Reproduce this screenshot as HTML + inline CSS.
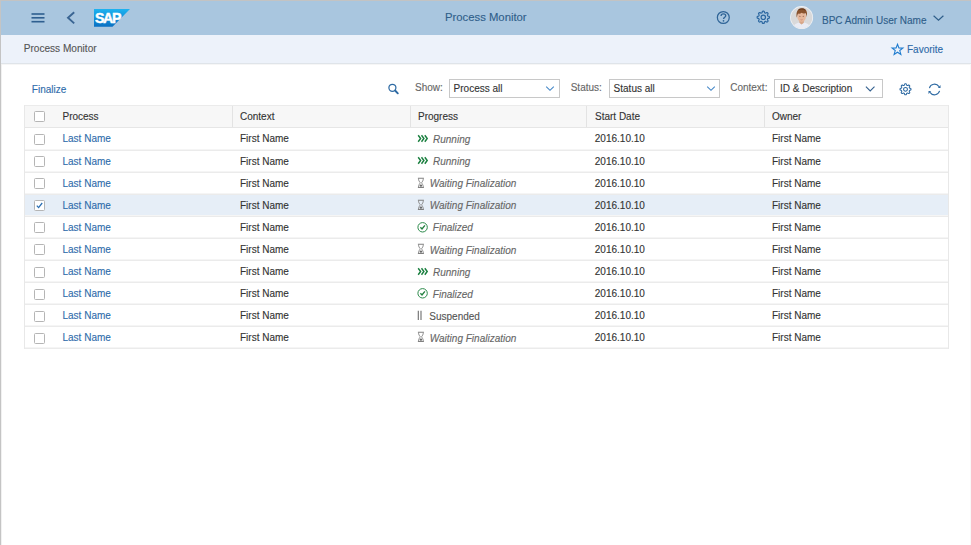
<!DOCTYPE html>
<html><head><meta charset="utf-8">
<style>
*{margin:0;padding:0;box-sizing:border-box}
html,body{width:971px;height:545px;overflow:hidden;background:#fff}
body{position:relative;font-family:"Liberation Sans",sans-serif;font-size:10px;color:#333}
.a{position:absolute;white-space:nowrap;line-height:1;-webkit-text-stroke:0.12px currentColor}
#edgeT{position:absolute;left:0;top:0;width:971px;height:1px;background:#c3c3c3}
#edgeL{position:absolute;left:0;top:0;width:1px;height:545px;background:#c4c4c4}
#edgeL2{position:absolute;left:1px;top:64px;width:1px;height:481px;background:#f1f1f1}
#edgeR{position:absolute;left:970px;top:64px;width:1px;height:481px;background:#f9f9f9}
#shell{position:absolute;left:1px;top:1px;width:970px;height:34px;background:#a9c6df}
#sub{position:absolute;left:1px;top:35px;width:970px;height:29px;background:#edf2fa;border-bottom:1px solid #dfe4e9}
#subsh{position:absolute;left:1px;top:64px;width:970px;height:1px;background:#f6f6f6}
.hdr{position:absolute;left:24px;top:105px;width:925px;height:23px;background:#f7f7f7;border-top:1px solid #ebebeb;border-bottom:1px solid #e6e6e6}
.selbg{position:absolute;left:25px;width:923px;background:#e6eef7}
.hl{position:absolute;left:24px;width:925px;height:2px;background:linear-gradient(#f5f5f5 0,#f5f5f5 50%,#ebebeb 50%,#ebebeb 100%)}
.vl{position:absolute;width:1px;background:#e8e8e8}
.vd{position:absolute;top:106px;width:1px;height:21px;background:#e3e3e3}
.cb{position:absolute;left:34px;width:11px;height:11px;border:1.5px solid #b5b5b5;border-radius:1.5px;background:#fff}
.lnk{color:#2f6cab}
.it{font-style:italic;color:#666}
.dd{position:absolute;top:79px;height:19px;border:1px solid #c8c8c8;background:#fff}
.lbl{color:#666}
</style></head><body>
<div id="shell"></div>
<div id="sub"></div>
<div id="subsh"></div>
<div id="edgeT"></div>
<div id="edgeL"></div>
<div id="edgeL2"></div>
<div id="edgeR"></div>

<svg class="a" style="left:31px;top:12px" width="14" height="11" viewBox="0 0 14 11">
  <rect x="0.5" y="1.2" width="13" height="1.6" fill="#2f5f90"/>
  <rect x="0.5" y="5" width="13" height="1.6" fill="#2f5f90"/>
  <rect x="0.5" y="8.9" width="13" height="1.6" fill="#2f5f90"/>
</svg>
<svg class="a" style="left:64px;top:10px" width="14" height="16" viewBox="0 0 14 16">
  <path d="M10.2 2.2 L4 7.8 L10.2 13.4" fill="none" stroke="#3a6593" stroke-width="1.9"/>
</svg>
<svg class="a" style="left:94px;top:9px" width="37" height="18" viewBox="0 0 37 18">
  <defs><linearGradient id="sg" x1="0" y1="0" x2="0" y2="1"><stop offset="0" stop-color="#1eb3f0"/><stop offset="1" stop-color="#0a6fc2"/></linearGradient></defs>
  <path d="M0 0 H36 L18.5 17.8 H0 Z" fill="url(#sg)"/>
  <text x="0.9" y="14.2" font-family="Liberation Sans" font-weight="bold" font-size="14.2" fill="#fff" stroke="#fff" stroke-width="0.45" letter-spacing="-1.3">SAP</text>
</svg>
<div class="a" style="left:445px;top:11.8px;font-size:11.3px;color:#2f5e8a">Process Monitor</div>

<svg class="a" style="left:715px;top:9px" width="17" height="17" viewBox="0 0 17 17">
  <circle cx="8.3" cy="8.5" r="5.95" fill="none" stroke="#2f6497" stroke-width="1.25"/>
  <path d="M6.05 6.95 C6.05 5.6 7.05 4.9 8.4 4.9 C9.8 4.9 10.75 5.7 10.75 6.85 C10.75 8.3 8.55 8.45 8.55 10.1" fill="none" stroke="#2f6497" stroke-width="1.3"/>
  <circle cx="8.5" cy="11.85" r="0.85" fill="#2f6497"/>
</svg>
<svg class="a" style="left:755px;top:9px" width="17" height="17" viewBox="0 0 17 17">
  <g transform="translate(8.3,8.3)">
  <path d="M0.00 -6.15 L0.24 -6.14 L0.48 -6.11 L0.71 -6.02 L0.92 -5.78 L1.05 -5.30 L1.15 -4.81 L1.29 -4.56 L1.44 -4.45 L1.61 -4.37 L1.78 -4.30 L1.95 -4.23 L2.12 -4.16 L2.32 -4.13 L2.58 -4.22 L3.00 -4.49 L3.44 -4.74 L3.75 -4.76 L3.98 -4.66 L4.17 -4.51 L4.35 -4.35 L4.51 -4.17 L4.66 -3.98 L4.76 -3.75 L4.74 -3.44 L4.49 -3.00 L4.22 -2.58 L4.13 -2.32 L4.16 -2.12 L4.23 -1.95 L4.30 -1.78 L4.37 -1.61 L4.45 -1.44 L4.56 -1.29 L4.81 -1.15 L5.30 -1.05 L5.78 -0.92 L6.02 -0.71 L6.11 -0.48 L6.14 -0.24 L6.15 0.00 L6.14 0.24 L6.11 0.48 L6.02 0.71 L5.78 0.92 L5.30 1.05 L4.81 1.15 L4.56 1.29 L4.45 1.44 L4.37 1.61 L4.30 1.78 L4.23 1.95 L4.16 2.12 L4.13 2.32 L4.22 2.58 L4.49 3.00 L4.74 3.44 L4.76 3.75 L4.66 3.98 L4.51 4.17 L4.35 4.35 L4.17 4.51 L3.98 4.66 L3.75 4.76 L3.44 4.74 L3.00 4.49 L2.58 4.22 L2.32 4.13 L2.12 4.16 L1.95 4.23 L1.78 4.30 L1.61 4.37 L1.44 4.45 L1.29 4.56 L1.15 4.81 L1.05 5.30 L0.92 5.78 L0.71 6.02 L0.48 6.11 L0.24 6.14 L0.00 6.15 L-0.24 6.14 L-0.48 6.11 L-0.71 6.02 L-0.92 5.78 L-1.05 5.30 L-1.15 4.81 L-1.29 4.56 L-1.44 4.45 L-1.61 4.37 L-1.78 4.30 L-1.95 4.23 L-2.12 4.16 L-2.32 4.13 L-2.58 4.22 L-3.00 4.49 L-3.44 4.74 L-3.75 4.76 L-3.98 4.66 L-4.17 4.51 L-4.35 4.35 L-4.51 4.17 L-4.66 3.98 L-4.76 3.75 L-4.74 3.44 L-4.49 3.00 L-4.22 2.58 L-4.13 2.32 L-4.16 2.12 L-4.23 1.95 L-4.30 1.78 L-4.37 1.61 L-4.45 1.44 L-4.56 1.29 L-4.81 1.15 L-5.30 1.05 L-5.78 0.92 L-6.02 0.71 L-6.11 0.48 L-6.14 0.24 L-6.15 0.00 L-6.14 -0.24 L-6.11 -0.48 L-6.02 -0.71 L-5.78 -0.92 L-5.30 -1.05 L-4.81 -1.15 L-4.56 -1.29 L-4.45 -1.44 L-4.37 -1.61 L-4.30 -1.78 L-4.23 -1.95 L-4.16 -2.12 L-4.13 -2.32 L-4.22 -2.58 L-4.49 -3.00 L-4.74 -3.44 L-4.76 -3.75 L-4.66 -3.98 L-4.51 -4.17 L-4.35 -4.35 L-4.17 -4.51 L-3.98 -4.66 L-3.75 -4.76 L-3.44 -4.74 L-3.00 -4.49 L-2.58 -4.22 L-2.32 -4.13 L-2.12 -4.16 L-1.95 -4.23 L-1.78 -4.30 L-1.61 -4.37 L-1.44 -4.45 L-1.29 -4.56 L-1.15 -4.81 L-1.05 -5.30 L-0.92 -5.78 L-0.71 -6.02 L-0.48 -6.11 L-0.24 -6.14Z" fill="none" stroke="#2c67a0" stroke-width="1.2" stroke-linejoin="round"/>
  <circle r="2.2" fill="none" stroke="#2c67a0" stroke-width="1.2"/>
  </g>
</svg>
<svg class="a" style="left:790px;top:6px" width="24" height="24" viewBox="0 0 24 24">
  <defs><clipPath id="avc"><circle cx="11.6" cy="11.6" r="10.7"/></clipPath></defs>
  <circle cx="11.6" cy="11.6" r="11.5" fill="#f0f2f5"/>
  <g clip-path="url(#avc)">
    <rect x="0" y="0" width="24" height="24" fill="#d9d9da"/>
    <path d="M2.5 24 C3 18.8 6 17 9.2 16.4 L11.6 18.6 L14.1 16.4 C17.3 17 20.2 18.8 20.7 24 Z" fill="#e9ebf4"/>
    <path d="M9.4 12.5 L9.4 16.8 L11.6 18.6 L13.8 16.8 L13.8 12.5 Z" fill="#d8a688"/>
    <ellipse cx="11.6" cy="10.4" rx="4.3" ry="5.4" fill="#e6b79b"/>
    <ellipse cx="9.9" cy="10.2" rx="0.8" ry="0.45" fill="#7d5546"/>
    <ellipse cx="13.3" cy="10.2" rx="0.8" ry="0.45" fill="#7d5546"/>
    <path d="M10.6 13.6 Q11.6 14.1 12.6 13.6" stroke="#c77f6f" stroke-width="0.7" fill="none"/>
    <path d="M6.7 11.8 C5.6 5 8.4 2.3 11.9 2.3 C15.6 2.3 17.8 4.6 16.9 11.2 C16.5 9.2 16.2 7.8 15.3 7 C14.2 8 12.6 7.6 11.6 6.8 C10.6 7.8 9.2 8 8.1 7.6 C7.5 8.6 7.1 10 6.7 11.8 Z" fill="#8a532e"/>
    <path d="M8.5 3.8 C10 2.6 13.6 2.6 15.2 4.2" stroke="#5e3419" stroke-width="0.9" fill="none"/>
  </g>
</svg>
<div class="a" style="left:822px;top:16px;font-size:10px;color:#2f5e8a">BPC Admin User Name</div>
<svg class="a" style="left:932px;top:14.3px" width="13" height="9" viewBox="0 0 13 9">
  <path d="M1.6 1.7 L6.5 6.1 L11.4 1.7" fill="none" stroke="#2f5e8a" stroke-width="1.2"/>
</svg>

<div class="a" style="left:23.7px;top:43.5px;font-size:10.1px;color:#555">Process Monitor</div>
<svg class="a" style="left:890px;top:41.5px" width="15" height="15" viewBox="0 0 15 15">
  <g transform="translate(7.5,7.7) scale(0.87) translate(-7.5,-7.5)">
  <path d="M7.5 1.3 L9.1 5.6 L13.7 5.7 L10.1 8.5 L11.4 12.9 L7.5 10.4 L3.6 12.9 L4.9 8.5 L1.3 5.7 L5.9 5.6 Z" fill="none" stroke="#1f7ccf" stroke-width="1.25" stroke-linejoin="miter"/>
  </g>
</svg>
<div class="a" style="left:907px;top:44.6px;font-size:10px;color:#2d6aa8">Favorite</div>

<div class="a lnk" style="left:31.8px;top:85.4px">Finalize</div>
<svg class="a" style="left:386px;top:82px" width="14" height="14" viewBox="0 0 14 14">
  <circle cx="6.4" cy="5.75" r="3.5" fill="none" stroke="#2d6aa3" stroke-width="1.25"/>
  <path d="M9.1 8.5 L11.8 11.3" stroke="#2d6aa3" stroke-width="1.9" stroke-linecap="round"/>
</svg>
<div class="a lbl" style="left:415px;top:83px">Show:</div>
<div class="dd" style="left:449px;width:111px"></div>
<div class="a" style="left:453.6px;top:84.2px">Process all</div>
<svg class="a" style="left:545px;top:85px" width="10" height="7" viewBox="0 0 10 7">
  <path d="M1.2 1.6 L5 5.3 L8.8 1.6" fill="none" stroke="#4185c6" stroke-width="1.05"/>
</svg>
<div class="a lbl" style="left:570.7px;top:83px">Status:</div>
<div class="dd" style="left:609px;width:111px"></div>
<div class="a" style="left:613.6px;top:84.2px">Status all</div>
<svg class="a" style="left:706px;top:85px" width="10" height="7" viewBox="0 0 10 7">
  <path d="M1.2 1.6 L5 5.3 L8.8 1.6" fill="none" stroke="#4185c6" stroke-width="1.05"/>
</svg>
<div class="a lbl" style="left:730.2px;top:83px">Context:</div>
<div class="dd" style="left:774px;width:109px"></div>
<div class="a" style="left:780px;top:84.2px">ID &amp; Description</div>
<svg class="a" style="left:864px;top:85px" width="12" height="8" viewBox="0 0 12 8">
  <path d="M1.9 1.7 L6.2 5.9 L10.5 1.7" fill="none" stroke="#34618f" stroke-width="1.1"/>
</svg>
<svg class="a" style="left:898px;top:81.5px" width="15" height="15" viewBox="0 0 15 15">
  <g transform="translate(7.5,7.3)">
  <path d="M0.00 -5.50 L0.22 -5.49 L0.43 -5.46 L0.64 -5.39 L0.82 -5.18 L0.95 -4.76 L1.04 -4.33 L1.16 -4.12 L1.30 -4.01 L1.46 -3.94 L1.61 -3.88 L1.76 -3.82 L1.92 -3.76 L2.09 -3.73 L2.33 -3.80 L2.69 -4.03 L3.08 -4.24 L3.36 -4.26 L3.56 -4.17 L3.73 -4.04 L3.89 -3.89 L4.04 -3.73 L4.17 -3.56 L4.26 -3.36 L4.24 -3.08 L4.03 -2.69 L3.80 -2.33 L3.73 -2.09 L3.76 -1.92 L3.82 -1.76 L3.88 -1.61 L3.94 -1.46 L4.01 -1.30 L4.12 -1.16 L4.33 -1.04 L4.76 -0.95 L5.18 -0.82 L5.39 -0.64 L5.46 -0.43 L5.49 -0.22 L5.50 0.00 L5.49 0.22 L5.46 0.43 L5.39 0.64 L5.18 0.82 L4.76 0.95 L4.33 1.04 L4.12 1.16 L4.01 1.30 L3.94 1.46 L3.88 1.61 L3.82 1.76 L3.76 1.92 L3.73 2.09 L3.80 2.33 L4.03 2.69 L4.24 3.08 L4.26 3.36 L4.17 3.56 L4.04 3.73 L3.89 3.89 L3.73 4.04 L3.56 4.17 L3.36 4.26 L3.08 4.24 L2.69 4.03 L2.33 3.80 L2.09 3.73 L1.92 3.76 L1.76 3.82 L1.61 3.88 L1.46 3.94 L1.30 4.01 L1.16 4.12 L1.04 4.33 L0.95 4.76 L0.82 5.18 L0.64 5.39 L0.43 5.46 L0.22 5.49 L0.00 5.50 L-0.22 5.49 L-0.43 5.46 L-0.64 5.39 L-0.82 5.18 L-0.95 4.76 L-1.04 4.33 L-1.16 4.12 L-1.30 4.01 L-1.46 3.94 L-1.61 3.88 L-1.76 3.82 L-1.92 3.76 L-2.09 3.73 L-2.33 3.80 L-2.69 4.03 L-3.08 4.24 L-3.36 4.26 L-3.56 4.17 L-3.73 4.04 L-3.89 3.89 L-4.04 3.73 L-4.17 3.56 L-4.26 3.36 L-4.24 3.08 L-4.03 2.69 L-3.80 2.33 L-3.73 2.09 L-3.76 1.92 L-3.82 1.76 L-3.88 1.61 L-3.94 1.46 L-4.01 1.30 L-4.12 1.16 L-4.33 1.04 L-4.76 0.95 L-5.18 0.82 L-5.39 0.64 L-5.46 0.43 L-5.49 0.22 L-5.50 0.00 L-5.49 -0.22 L-5.46 -0.43 L-5.39 -0.64 L-5.18 -0.82 L-4.76 -0.95 L-4.33 -1.04 L-4.12 -1.16 L-4.01 -1.30 L-3.94 -1.46 L-3.88 -1.61 L-3.82 -1.76 L-3.76 -1.92 L-3.73 -2.09 L-3.80 -2.33 L-4.03 -2.69 L-4.24 -3.08 L-4.26 -3.36 L-4.17 -3.56 L-4.04 -3.73 L-3.89 -3.89 L-3.73 -4.04 L-3.56 -4.17 L-3.36 -4.26 L-3.08 -4.24 L-2.69 -4.03 L-2.33 -3.80 L-2.09 -3.73 L-1.92 -3.76 L-1.76 -3.82 L-1.61 -3.88 L-1.46 -3.94 L-1.30 -4.01 L-1.16 -4.12 L-1.04 -4.33 L-0.95 -4.76 L-0.82 -5.18 L-0.64 -5.39 L-0.43 -5.46 L-0.22 -5.49Z" fill="none" stroke="#2d69a2" stroke-width="1.05" stroke-linejoin="round"/>
  <circle r="1.9" fill="none" stroke="#2d69a2" stroke-width="1.05"/>
  </g>
</svg>
<svg class="a" style="left:926.5px;top:81.8px" width="15" height="15" viewBox="0 0 15 15">
  <path d="M2.4 6.04 A5.3 5.3 0 0 1 11.95 4.61" fill="none" stroke="#2d69a2" stroke-width="1.1"/>
  <path d="M13.5 3.1 L13.5 6.0 L10.9 6.0 Z" fill="#2d69a2"/>
  <path d="M12.6 8.96 A5.3 5.3 0 0 1 3.05 10.39" fill="none" stroke="#2d69a2" stroke-width="1.1"/>
  <path d="M1.5 11.9 L1.5 9.0 L4.1 9.0 Z" fill="#2d69a2"/>
</svg>

<div class="hdr"></div>
<div class="vd" style="left:232px"></div>
<div class="vd" style="left:410px"></div>
<div class="vd" style="left:586px"></div>
<div class="vd" style="left:764px"></div>
<div class="cb" style="top:111px"></div>
<div class="a" style="left:62.5px;top:112.2px">Process</div>
<div class="a" style="left:240px;top:112.2px">Context</div>
<div class="a" style="left:418px;top:112.2px">Progress</div>
<div class="a" style="left:595px;top:112.2px">Start Date</div>
<div class="a" style="left:772px;top:112.2px">Owner</div>

<div class="selbg" style="top:195px;height:21px"></div>
<div class="hl" style="top:149px"></div>
<div class="hl" style="top:171px"></div>
<div class="hl" style="top:193px"></div>
<div class="hl" style="top:215px"></div>
<div class="hl" style="top:237px"></div>
<div class="hl" style="top:259px"></div>
<div class="hl" style="top:281px"></div>
<div class="hl" style="top:303px"></div>
<div class="hl" style="top:325px"></div>
<div class="hl" style="top:347px"></div>
<div class="vl" style="left:24px;top:105px;height:244px"></div>
<div class="vl" style="left:948px;top:105px;height:244px"></div>
<div class="cb" style="top:134px"></div>
<div class="a lnk" style="left:62.5px;top:134.40px">Last Name</div>
<div class="a" style="left:240px;top:134.40px">First Name</div>
<svg class="a" style="left:417px;top:134.00px" width="12" height="9" viewBox="0 0 12 9"><path d="M1.2 1.3 L3.6 4.5 L1.2 7.7 M4.5 1.3 L6.9 4.5 L4.5 7.7 M7.8 1.3 L10.2 4.5 L7.8 7.7" fill="none" stroke="#1a7f3f" stroke-width="1.45"/></svg>
<div class="a it" style="left:433px;top:135.00px">Running</div>
<div class="a" style="left:594.8px;top:134.40px">2016.10.10</div>
<div class="a" style="left:772px;top:134.40px">First Name</div>
<div class="cb" style="top:156px"></div>
<div class="a lnk" style="left:62.5px;top:156.50px">Last Name</div>
<div class="a" style="left:240px;top:156.50px">First Name</div>
<svg class="a" style="left:417px;top:156.10px" width="12" height="9" viewBox="0 0 12 9"><path d="M1.2 1.3 L3.6 4.5 L1.2 7.7 M4.5 1.3 L6.9 4.5 L4.5 7.7 M7.8 1.3 L10.2 4.5 L7.8 7.7" fill="none" stroke="#1a7f3f" stroke-width="1.45"/></svg>
<div class="a it" style="left:433px;top:157.10px">Running</div>
<div class="a" style="left:594.8px;top:156.50px">2016.10.10</div>
<div class="a" style="left:772px;top:156.50px">First Name</div>
<div class="cb" style="top:178px"></div>
<div class="a lnk" style="left:62.5px;top:178.60px">Last Name</div>
<div class="a" style="left:240px;top:178.60px">First Name</div>
<svg class="a" style="left:417px;top:176.70px" width="8" height="12" viewBox="0 0 8 12"><path d="M0.9 1.25 H6.9 M0.9 10.45 H6.9" stroke="#808080" stroke-width="1.1"/><path d="M1.5 1.5 C1.5 3.6 2.4 4.6 3.3 5.85 C2.4 7.1 1.5 8.1 1.5 10.2 M6.3 1.5 C6.3 3.6 5.4 4.6 4.5 5.85 C5.4 7.1 6.3 8.1 6.3 10.2" fill="none" stroke="#858585" stroke-width="0.9"/><ellipse cx="3.9" cy="8.7" rx="1.3" ry="1.1" fill="#6a6a6a"/></svg>
<div class="a it" style="left:429.8px;top:179.20px">Waiting Finalization</div>
<div class="a" style="left:594.8px;top:178.60px">2016.10.10</div>
<div class="a" style="left:772px;top:178.60px">First Name</div>
<div class="cb" style="top:200px"></div>
<svg class="a" style="left:35px;top:201px" width="9" height="9" viewBox="0 0 9 9"><path d="M1.8 4.6 L3.6 6.6 L7.2 2" fill="none" stroke="#2b6fb3" stroke-width="1.3"/></svg>
<div class="a lnk" style="left:62.5px;top:200.70px">Last Name</div>
<div class="a" style="left:240px;top:200.70px">First Name</div>
<svg class="a" style="left:417px;top:198.80px" width="8" height="12" viewBox="0 0 8 12"><path d="M0.9 1.25 H6.9 M0.9 10.45 H6.9" stroke="#808080" stroke-width="1.1"/><path d="M1.5 1.5 C1.5 3.6 2.4 4.6 3.3 5.85 C2.4 7.1 1.5 8.1 1.5 10.2 M6.3 1.5 C6.3 3.6 5.4 4.6 4.5 5.85 C5.4 7.1 6.3 8.1 6.3 10.2" fill="none" stroke="#858585" stroke-width="0.9"/><ellipse cx="3.9" cy="8.7" rx="1.3" ry="1.1" fill="#6a6a6a"/></svg>
<div class="a it" style="left:429.8px;top:201.30px">Waiting Finalization</div>
<div class="a" style="left:594.8px;top:200.70px">2016.10.10</div>
<div class="a" style="left:772px;top:200.70px">First Name</div>
<div class="cb" style="top:222px"></div>
<div class="a lnk" style="left:62.5px;top:222.80px">Last Name</div>
<div class="a" style="left:240px;top:222.80px">First Name</div>
<svg class="a" style="left:416px;top:220.90px" width="13" height="13" viewBox="0 0 13 13"><circle cx="6.6" cy="6.3" r="4.7" fill="none" stroke="#2b8a4a" stroke-width="1.0"/><path d="M4.4 6.3 L6.0 8.0 L8.9 4.3" fill="none" stroke="#238040" stroke-width="1.35"/></svg>
<div class="a it" style="left:432.8px;top:223.40px">Finalized</div>
<div class="a" style="left:594.8px;top:222.80px">2016.10.10</div>
<div class="a" style="left:772px;top:222.80px">First Name</div>
<div class="cb" style="top:244px"></div>
<div class="a lnk" style="left:62.5px;top:244.90px">Last Name</div>
<div class="a" style="left:240px;top:244.90px">First Name</div>
<svg class="a" style="left:417px;top:243.00px" width="8" height="12" viewBox="0 0 8 12"><path d="M0.9 1.25 H6.9 M0.9 10.45 H6.9" stroke="#808080" stroke-width="1.1"/><path d="M1.5 1.5 C1.5 3.6 2.4 4.6 3.3 5.85 C2.4 7.1 1.5 8.1 1.5 10.2 M6.3 1.5 C6.3 3.6 5.4 4.6 4.5 5.85 C5.4 7.1 6.3 8.1 6.3 10.2" fill="none" stroke="#858585" stroke-width="0.9"/><ellipse cx="3.9" cy="8.7" rx="1.3" ry="1.1" fill="#6a6a6a"/></svg>
<div class="a it" style="left:429.8px;top:245.50px">Waiting Finalization</div>
<div class="a" style="left:594.8px;top:244.90px">2016.10.10</div>
<div class="a" style="left:772px;top:244.90px">First Name</div>
<div class="cb" style="top:267px"></div>
<div class="a lnk" style="left:62.5px;top:267.00px">Last Name</div>
<div class="a" style="left:240px;top:267.00px">First Name</div>
<svg class="a" style="left:417px;top:266.60px" width="12" height="9" viewBox="0 0 12 9"><path d="M1.2 1.3 L3.6 4.5 L1.2 7.7 M4.5 1.3 L6.9 4.5 L4.5 7.7 M7.8 1.3 L10.2 4.5 L7.8 7.7" fill="none" stroke="#1a7f3f" stroke-width="1.45"/></svg>
<div class="a it" style="left:433px;top:267.60px">Running</div>
<div class="a" style="left:594.8px;top:267.00px">2016.10.10</div>
<div class="a" style="left:772px;top:267.00px">First Name</div>
<div class="cb" style="top:289px"></div>
<div class="a lnk" style="left:62.5px;top:289.10px">Last Name</div>
<div class="a" style="left:240px;top:289.10px">First Name</div>
<svg class="a" style="left:416px;top:287.20px" width="13" height="13" viewBox="0 0 13 13"><circle cx="6.6" cy="6.3" r="4.7" fill="none" stroke="#2b8a4a" stroke-width="1.0"/><path d="M4.4 6.3 L6.0 8.0 L8.9 4.3" fill="none" stroke="#238040" stroke-width="1.35"/></svg>
<div class="a it" style="left:432.8px;top:289.70px">Finalized</div>
<div class="a" style="left:594.8px;top:289.10px">2016.10.10</div>
<div class="a" style="left:772px;top:289.10px">First Name</div>
<div class="cb" style="top:311px"></div>
<div class="a lnk" style="left:62.5px;top:311.20px">Last Name</div>
<div class="a" style="left:240px;top:311.20px">First Name</div>
<svg class="a" style="left:417px;top:309.80px" width="7" height="11" viewBox="0 0 7 11"><path d="M1.3 0.8 V9.9 M4 0.8 V9.9" stroke="#6d6d6d" stroke-width="1.1"/></svg>
<div class="a" style="left:429.3px;top:311.80px;color:#555">Suspended</div>
<div class="a" style="left:594.8px;top:311.20px">2016.10.10</div>
<div class="a" style="left:772px;top:311.20px">First Name</div>
<div class="cb" style="top:333px"></div>
<div class="a lnk" style="left:62.5px;top:333.30px">Last Name</div>
<div class="a" style="left:240px;top:333.30px">First Name</div>
<svg class="a" style="left:417px;top:331.40px" width="8" height="12" viewBox="0 0 8 12"><path d="M0.9 1.25 H6.9 M0.9 10.45 H6.9" stroke="#808080" stroke-width="1.1"/><path d="M1.5 1.5 C1.5 3.6 2.4 4.6 3.3 5.85 C2.4 7.1 1.5 8.1 1.5 10.2 M6.3 1.5 C6.3 3.6 5.4 4.6 4.5 5.85 C5.4 7.1 6.3 8.1 6.3 10.2" fill="none" stroke="#858585" stroke-width="0.9"/><ellipse cx="3.9" cy="8.7" rx="1.3" ry="1.1" fill="#6a6a6a"/></svg>
<div class="a it" style="left:429.8px;top:333.90px">Waiting Finalization</div>
<div class="a" style="left:594.8px;top:333.30px">2016.10.10</div>
<div class="a" style="left:772px;top:333.30px">First Name</div>
</body></html>
